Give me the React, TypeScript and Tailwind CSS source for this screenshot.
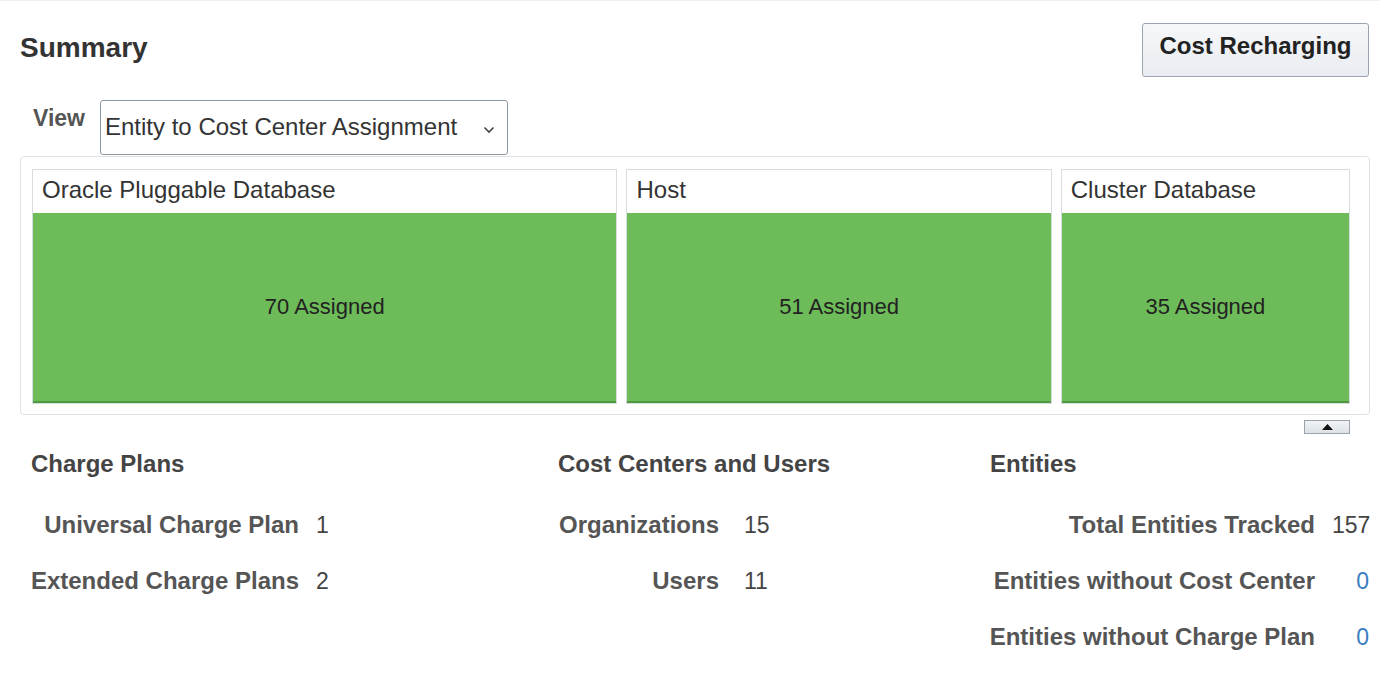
import React from 'react';

const tiles = [
  { name: 'Oracle Pluggable Database', count: 70, grow: 583 },
  { name: 'Host', count: 51, grow: 423 },
  { name: 'Cluster Database', count: 35, grow: 287 },
];

function Row({ label, value, labelW, gap, valueW, link }: { label: string; value: string; labelW: string; gap: string; valueW?: string; link?: boolean }) {
  return (
    <div className={`flex h-[56px] items-center ${gap}`}>
      <div className={`${labelW} shrink-0 flex justify-end`}>
        <span className="whitespace-nowrap font-bold text-[24px] text-[#555]">{label}</span>
      </div>
      <span className={`${valueW ?? ''} ${valueW ? 'text-right' : ''} text-[23px] ${link ? 'text-[#3a7cc0]' : 'text-[#444]'}`}>{value}</span>
    </div>
  );
}

export default function App() {
  return (
    <div className="w-[1380px] h-[690px] bg-white overflow-hidden border-t border-[#eeeeee]" style={{ fontFamily: '"Liberation Sans", Arial, sans-serif' }}>
      {/* header */}
      <div className="flex justify-between items-start pl-[20px] pr-[11px] pt-[22px]">
        <h1 className="mt-[9px] text-[28px] leading-[32px] font-bold text-[#333]">Summary</h1>
        <button className="h-[54px] w-[227px] rounded-[3px] border border-[#9ca5ad] bg-gradient-to-b from-[#f6f7f9] to-[#e9edf1] text-[24px] font-bold text-[#222] pb-[8px]">
          Cost Recharging
        </button>
      </div>

      {/* view selector */}
      <div className="flex items-start mt-[23px] pl-[33px]">
        <span className="mt-[4px] w-[67px] text-[23px] leading-[28px] font-bold text-[#555]">View</span>
        <div className="flex items-center justify-between h-[55px] w-[408px] border border-[#8d9ba6] rounded-[3px] pl-[4px] pr-[12px]">
          <span className="text-[24px] text-[#333] -mt-[2px]">Entity to Cost Center Assignment</span>
          <svg width="12" height="8" viewBox="0 0 12 8" className="mt-[4px]">
            <path d="M1.5 1.5 L6 6 L10.5 1.5" fill="none" stroke="#444" strokeWidth="1.6" />
          </svg>
        </div>
      </div>

      {/* treemap */}
      <div className="ml-[20px] mt-[1px] w-[1350px] h-[259px] border border-[#dfe2e5] rounded-[4px] pt-[12px] pb-[10px] pl-[11px] pr-[19px] flex gap-[9px]">
        {tiles.map((t) => (
          <div key={t.name} className="flex flex-col border border-[#d7dce0] basis-0 min-w-0" style={{ flexGrow: t.grow }}>
            <div className="h-[43px] bg-white pl-[9px] text-[24px] leading-[40px] text-[#333] whitespace-nowrap">{t.name}</div>
            <div className="flex-1 bg-[#6dbc59] border-b-2 border-[#4f9a3f] flex items-center justify-center text-[22px] text-[#222] pb-[2px]">
              {t.count} Assigned
            </div>
          </div>
        ))}
      </div>
      <div className="flex justify-end pr-[30px] mt-[5px]">
        <div className="w-[46px] h-[14px] border border-[#9aa3ab] bg-gradient-to-b from-[#f1f3f6] to-[#dde2e7] flex items-center justify-center">
          <svg width="11" height="6" viewBox="0 0 11 6">
            <path d="M0 6 L5.5 0 L11 6 Z" fill="#111" />
          </svg>
        </div>
      </div>

      {/* stats */}
      <div className="flex mt-[16px] pl-[31px]">
        <div className="w-[527px]">
          <h2 className="text-[24px] leading-[28px] font-bold text-[#444]">Charge Plans</h2>
          <div className="mt-[19px] ml-[2px]">
            <Row label="Universal Charge Plan" value="1" labelW="w-[266px]" gap="gap-[17px]" />
            <Row label="Extended Charge Plans" value="2" labelW="w-[266px]" gap="gap-[17px]" />
          </div>
        </div>
        <div className="w-[432px]">
          <h2 className="text-[24px] leading-[28px] font-bold text-[#444]">Cost Centers and Users</h2>
          <div className="mt-[19px]">
            <Row label="Organizations" value="15" labelW="w-[161px]" gap="gap-[25px]" />
            <Row label="Users" value="11" labelW="w-[161px]" gap="gap-[25px]" />
          </div>
        </div>
        <div className="w-[379px]">
          <h2 className="text-[24px] leading-[28px] font-bold text-[#444]">Entities</h2>
          <div className="mt-[19px]">
            <Row label="Total Entities Tracked" value="157" labelW="w-[325px]" gap="gap-[17px]" valueW="w-[37px]" />
            <Row label="Entities without Cost Center" value="0" labelW="w-[325px]" gap="gap-[17px]" valueW="w-[37px]" link />
            <Row label="Entities without Charge Plan" value="0" labelW="w-[325px]" gap="gap-[17px]" valueW="w-[37px]" link />
          </div>
        </div>
      </div>
    </div>
  );
}
